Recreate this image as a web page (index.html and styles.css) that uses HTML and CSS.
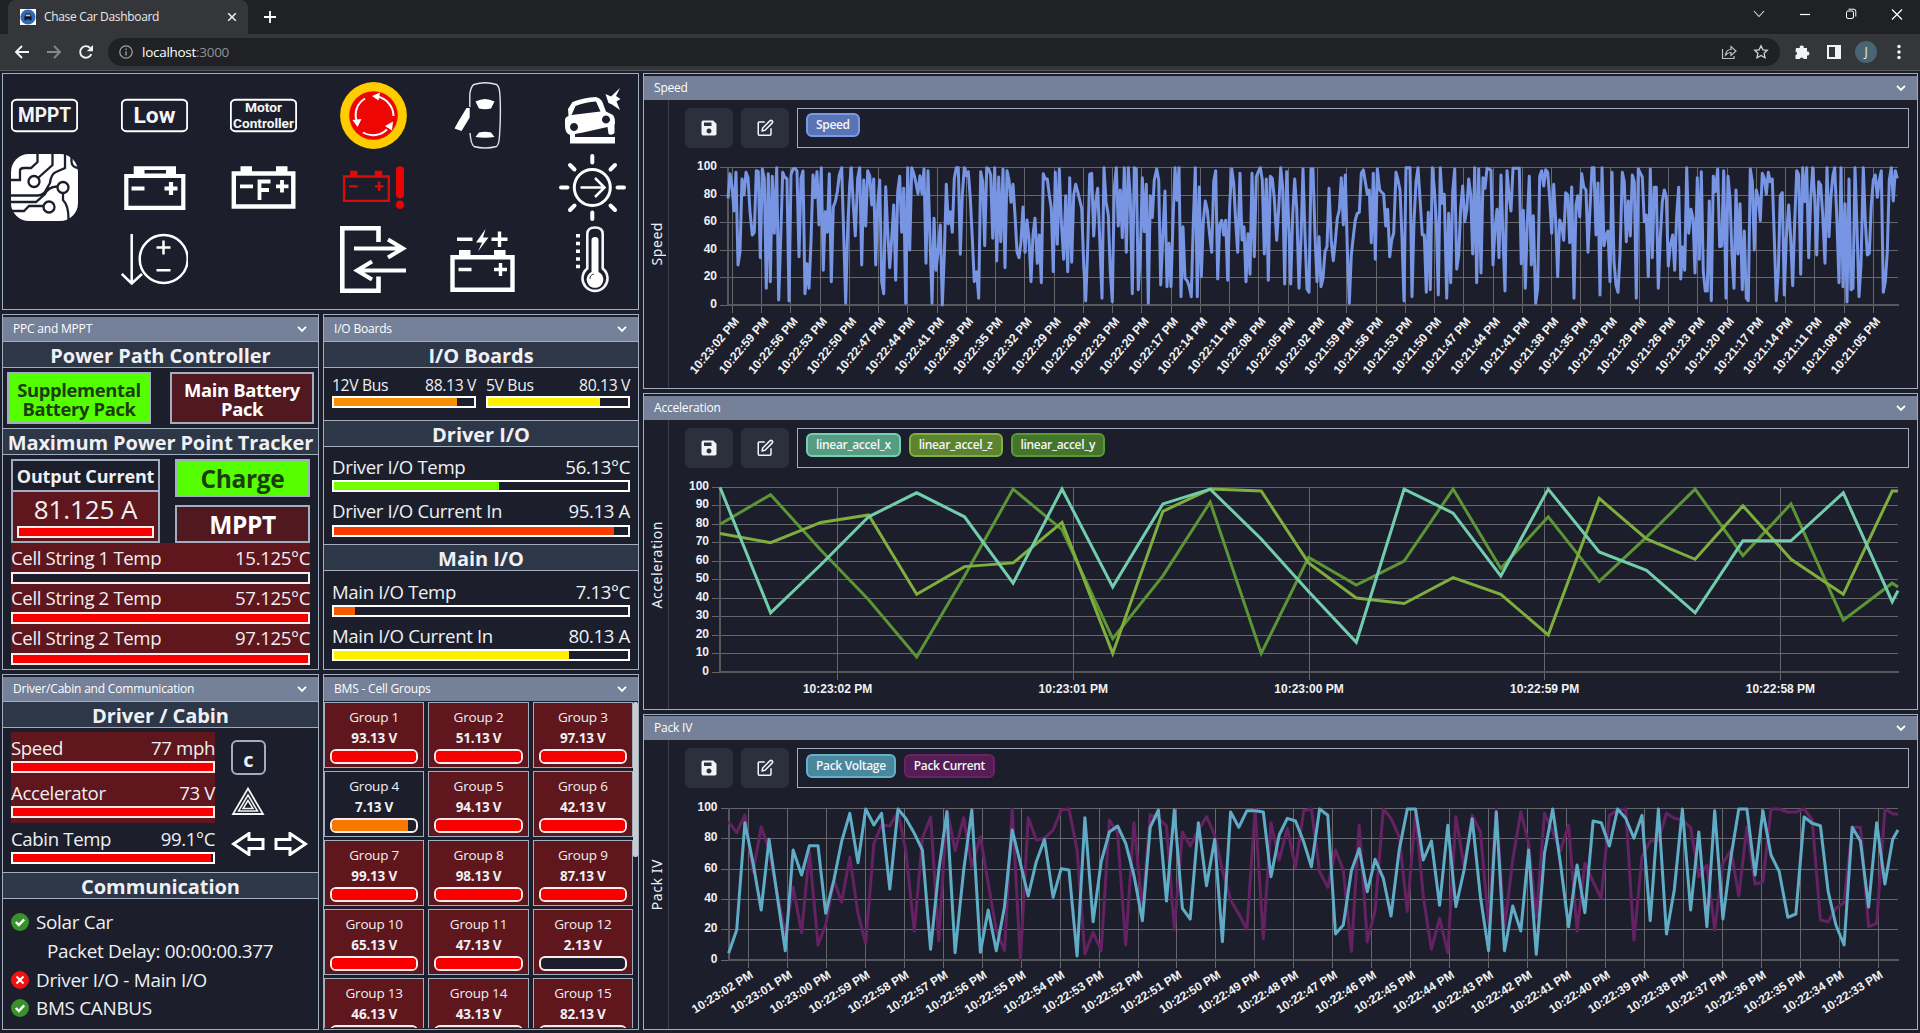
FILE: index.html
```html
<!DOCTYPE html>
<html lang="en">
<head>
<meta charset="utf-8">
<title>Chase Car Dashboard</title>
<link rel="stylesheet" href="styles.css">
</head>
<body>
<svg width="0" height="0" class="defs">
  <defs>
    <symbol id="chev" viewBox="0 0 12 12"><path d="M2 3.8l4 4 4-4" fill="none" stroke="#fff" stroke-width="1.9"/></symbol>
    <symbol id="save" viewBox="0 0 24 24"><path fill="#f3f4f8" fill-rule="evenodd" d="M5 3h12l4 4v12a2 2 0 0 1-2 2H5a2 2 0 0 1-2-2V5a2 2 0 0 1 2-2zM6 5.500v4h9v-4zM12 12.500a3 3 0 1 0 .01 0z"/></symbol>
    <symbol id="edit" viewBox="0 0 24 24"><g fill="none" stroke="#f3f4f8" stroke-width="2" stroke-linecap="round" stroke-linejoin="round"><path d="M11 4H4.500A1.500 1.500 0 0 0 3 5.500V20a1.500 1.500 0 0 0 1.500 1.500H18.500A1.500 1.500 0 0 0 20 20V13"/><path d="M18.500 2.500a2.100 2.100 0 0 1 3 3L12 15l-4 1 1-4z"/></g></symbol>
    <symbol id="ok" viewBox="0 0 18 18"><circle cx="9" cy="9" r="9" fill="#38912a"/><path d="M4.800 9l3 3 5.400-5.600" fill="none" stroke="#fff" stroke-width="2.400"/></symbol>
    <symbol id="bad" viewBox="0 0 18 18"><circle cx="9" cy="9" r="9" fill="#ee1212"/><path d="M5.500 5.500l7 7M12.500 5.500l-7 7" stroke="#fff" stroke-width="2"/></symbol>
  </defs>
</svg>

<header class="browser">
  <div class="tabstrip">
    <div class="tab">
      <svg class="favicon" viewBox="0 0 16 16"><rect width="16" height="16" fill="#fff"/><circle cx="8" cy="8" r="7.600" fill="#2f6cb8"/><path d="M4.500 7.500l1.200-3h4.600l1.200 3v4H10v-1H6v1H4.500z" fill="#10131c"/><path d="M6 5.600h4l.6 1.600H5.400z" fill="#a9c6e6"/></svg>
      <span class="tab-title">Chase Car Dashboard</span>
      <svg class="tab-close" viewBox="0 0 10 10"><path d="M1.200 1.200l7.600 7.600M8.800 1.200L1.200 8.800" stroke="#e8eaed" stroke-width="1.600"/></svg>
    </div>
    <svg class="newtab" viewBox="0 0 12 12"><path d="M6 0v12M0 6h12" stroke="#fff" stroke-width="1.800"/></svg>
    <div class="winctl">
      <svg viewBox="0 0 12 12"><path d="M1 3l5 5.500L11 3" fill="none" stroke="#ddd" stroke-width="1.100"/></svg>
      <svg viewBox="0 0 12 12"><path d="M1 6.500h10" stroke="#fff" stroke-width="1.200"/></svg>
      <svg viewBox="0 0 12 12"><rect x="1.500" y="3" width="7" height="7.500" rx="1.500" fill="none" stroke="#fff"/><path d="M3.500 1.200h5.300a2 2 0 0 1 2 2V8.500" fill="none" stroke="#fff"/></svg>
      <svg viewBox="0 0 12 12"><path d="M1 1.500l10 10M11 1.500l-10 10" stroke="#fff" stroke-width="1.200"/></svg>
    </div>
  </div>
  <div class="toolbar">
    <svg class="nav" viewBox="0 0 16 16"><path d="M15 8H2M8 2L2 8l6 6" fill="none" stroke="#f1f3f4" stroke-width="1.900"/></svg>
    <svg class="nav" viewBox="0 0 16 16"><path d="M1 8h13M8 2l6 6-6 6" fill="none" stroke="#85878b" stroke-width="1.900"/></svg>
    <svg class="nav" viewBox="0 0 16 16"><path d="M13.300 10.200A5.800 5.800 0 1 1 12.200 4" fill="none" stroke="#f1f3f4" stroke-width="1.900"/><path d="M15 1v6.200H8.800z" fill="#f1f3f4"/></svg>
    <div class="url">
      <svg class="info" viewBox="0 0 14 14"><circle cx="7" cy="7" r="6.200" fill="none" stroke="#9aa0a6" stroke-width="1.300"/><path d="M7 6.300V10.500M7 3.500v1.500" stroke="#9aa0a6" stroke-width="1.400"/></svg>
      <span class="host">localhost<i>:3000</i></span>
      <svg class="share" viewBox="0 0 16 16"><path d="M1.500 5v9.500H13V12M4.500 11C5 7.500 7 5.500 10 5.500V2.500l5 4.500-5 4.500v-3C7.500 8.500 6 9.300 4.500 11z" fill="none" stroke="#bdc1c6" stroke-width="1.200"/></svg>
      <svg class="star" viewBox="0 0 16 16"><path d="M8 1.700l1.900 4.100 4.400.5-3.200 3 .9 4.400L8 11.500l-4 2.200.9-4.400-3.200-3 4.400-.5z" fill="none" stroke="#d0d3d7" stroke-width="1.300"/></svg>
    </div>
    <svg class="ext" viewBox="0 0 16 16"><path fill="#f1f3f4" d="M2 4h3.800a2 2 0 1 1 3.900 0H13v3.600a2 2 0 1 1 0 3.900V15H9.700a2 2 0 0 0-3.900 0H1.500v-3.700a2 2 0 0 0 0-3.900z"/></svg>
    <svg class="side" viewBox="0 0 14 14"><path fill="#f1f3f4" fill-rule="evenodd" d="M0 0h14v14H0zM2 2v10h6V2z"/></svg>
    <span class="avatar">J</span>
    <svg class="dots" viewBox="0 0 4 16"><circle cx="2" cy="2.500" r="1.700" fill="#fff"/><circle cx="2" cy="8" r="1.700" fill="#fff"/><circle cx="2" cy="13.500" r="1.700" fill="#fff"/></svg>
  </div>
</header>

<main class="app">
  <div class="left">
    <section class="icons">
      <svg viewBox="0 0 67 67"><rect x=".8" y="17.800" width="65.400" height="31.400" rx="4.500" class="l2"/><text x="33.500" y="40" textLength="53" lengthAdjust="spacingAndGlyphs" font-size="19.500" class="t">MPPT</text></svg>
      <svg viewBox="0 0 67 67"><rect x=".8" y="17.800" width="65.400" height="31.400" rx="4.500" class="l2"/><text x="33.500" y="41.300" textLength="42" lengthAdjust="spacingAndGlyphs" font-size="22" class="t">Low</text></svg>
      <svg viewBox="0 0 67 67"><rect x=".8" y="17.800" width="65.400" height="31.400" rx="4.500" class="l2"/><text x="33.500" y="30" textLength="37" lengthAdjust="spacingAndGlyphs" font-size="13.500" class="t">Motor</text><text x="33.500" y="45.500" textLength="61" lengthAdjust="spacingAndGlyphs" font-size="13.500" class="t">Controller</text></svg>
      <svg viewBox="0 0 67 67"><circle cx="33.500" cy="33.500" r="33.400" fill="#fc0"/><circle cx="33.500" cy="33.500" r="24.300" fill="#f00505"/><g class="l2"><path d="M53.500 34A20 20 0 0 0 37 14.500M25 16.500a19 19 0 0 0-8.500 22M23 50.500a20 20 0 0 0 24-3"/></g><path fill="#fff" d="M32 14l8-3.500-1.500 8zM17.500 45l-5-7 9-1zM53 39.500l-1 9-7-4.500z"/></svg>
      <svg viewBox="0 0 67 67"><path d="M20.800 25V12Q22 4 25 2.500Q36 -1 47.500 2.500Q50.500 4 51 14Q52 33 50.500 54Q50 62.500 47.500 64.500Q36 67.500 25 64.500Q22 62.500 21 51" fill="none" stroke="#dfe2e8" stroke-width="1.400"/><path fill="#fff" d="M26.500 19.500Q36 14.500 45.500 19.500L42 26.500Q36 28 30 26.500zM30 50.500Q36 49 42 50.500L45.500 55Q36 56.500 26.500 55zM17.500 26h3.200v9.500L12.500 49l-7-2.500L9 40z"/></svg>
      <svg viewBox="0 0 67 67"><path fill="#fff" fill-rule="evenodd" d="M9 27L13.500 20Q25 15.500 37 15Q41 16 43 19L47 29.500L54 33Q57 38 55.500 43V51Q53 54 49.500 52L48.500 45L24 50.500L16 52V55H56V61.500H11V53Q6 51 6 44V38Q6 35 9.500 34zM12.500 33L41.500 29.500L37 19.500Q26 20 16.500 24zM15 41a4 4 0 1 0 .01 0zM47 33.500a4 4 0 1 0 .01 0zM61 6L57 14L61.500 17L57.500 19.500L61 28L53 22.500L49.500 21L46.500 12L52 14.500z"/></svg>

      <svg viewBox="0 0 67 67"><rect width="67" height="67" rx="18" fill="#fff"/><g fill="none" stroke="#1c1f2b" stroke-width="2.300"><path d="M0 26H9V17Q9 14 13 14H20L26.500 8V0M41.500 0V11L27 24M0 41.500H27Q33 41 35 36L39 29Q40 20 45 18L54 14V0M60.500 0V8Q61 13 67 14M0 48H25L34 40Q37 33 46 32.500M52 39V46Q58 52 57.500 67M0 57H13L18 52H32"/><circle cx="23" cy="27.500" r="5.500" fill="#fff"/><circle cx="52" cy="33.500" r="5.500" fill="#fff"/><circle cx="38" cy="53" r="5.500" fill="#fff"/></g></svg>
      <svg viewBox="0 0 67 67"><g class="l4"><path d="M5.300 22H62.300V53.800H5.300zM10.500 34.500H23.500M43.500 34.500h13M50 28v13" stroke-width="4.200"/></g><path fill="#fff" fill-rule="evenodd" d="M12.700 12.300H55V20H12.700zM23.500 16V19.500H45V16z"/></svg>
      <svg viewBox="0 0 67 67"><g class="l4"><path d="M3.800 19.500H63.300V52.500H3.800z" stroke-width="4.400"/><path d="M10 32.300H23M46 32.300h12.500M52 26v12.500M29.500 46V27.500H40.500M29.500 36H39" stroke-width="3.800"/></g><path fill="#fff" d="M10.500 12.300h11.500V18H10.500zM46 12.300h11.500V18H46z"/></svg>
      <svg viewBox="0 0 67 67"><path d="M4 22.500H48.800V46.800H4zM9 32.300H17.500M35 32.300h8.500M39.200 27.500v9.500" fill="none" stroke="#d90b0b" stroke-width="2.300"/><path fill="#ea0505" d="M10 16.700h7.500V22H10zM34.800 16.700h7.500V22H34.800z"/><rect x="56" y="12.300" width="8" height="32" rx="3.800" fill="#ea0505"/><circle cx="60" cy="50.800" r="4.200" fill="#ea0505"/></svg>
      <span></span>
      <svg viewBox="0 0 67 67"><g class="l3"><circle cx="33.300" cy="33.500" r="18"/><path d="M21.500 33.500H45M36 24L45.500 33.500L36 43" stroke-width="2.500"/><path stroke-width="4" stroke-linecap="round" d="M33.300 2v6.500M33.300 58.500v6.500M2 33.500h6.500M58.500 33.500H65M11 11l4.500 4.500M51.500 51.500L56 56M11 56l4.500-4.500M51.500 15.500L56 11"/></g></svg>

      <span></span>
      <svg viewBox="0 0 67 67"><g class="l2h"><path d="M10.700 8V57M.8 48L10.700 57.500L21 48M35.500 21.500H49.500M42.500 14.500v14M35.500 44.300h14"/><circle cx="42.700" cy="33" r="24"/></g></svg>
      <span></span>
      <svg viewBox="0 0 67 67"><g class="l4"><path d="M38.500 16V2.300H2.300V64.700H38.500V50.500" stroke-width="4.600"/><path d="M14 22.500H62M48 13.500L63 22.500L48 31.500M66 44.500H18M32 35.500L17 44.500L32 53.500" stroke-width="4"/></g></svg>
      <svg viewBox="0 0 67 67"><g class="l4"><path d="M3.500 31.300H63.500V63.800H3.500z" stroke-width="4.400"/><path d="M9.500 43.500H22.500M45 43.500h13M51.500 37v13M8 13.300H23.500M42.500 13.300H58.500M50.500 5.500V21" stroke-width="3.400"/></g><path fill="#fff" d="M10 24h11.500v6H10zM45 24h11.500v6H45zM36.500 3L27 16.500H33L29 25.500L39.500 11.500H34z"/></svg>
      <svg viewBox="0 0 67 67"><path d="M28.300 42.500V8Q28.300 1.500 36 1.500Q43.700 1.500 43.700 8V42.500A12.500 12.500 0 1 1 28.300 42.500z" fill="none" stroke="#f4f5f8" stroke-width="2.600"/><path d="M32.500 46V14Q32.500 11 36 11Q39.500 11 39.500 14V46A8.300 8.300 0 1 1 32.500 46z" fill="#fff"/><path d="M31 53a5 5 0 0 1 4-5" stroke="#333846" fill="none"/><path d="M17 9.800h4M17 17.500h4M17 25.300h4M17 33h4M17 40.500h4" stroke="#fff" stroke-width="3.600"/></svg>
    </section>

    <section class="panel ppc">
      <div class="bar-head"><span>PPC and MPPT</span><svg><use href="#chev"/></svg></div>
      <h2>Power Path Controller</h2>
      <div class="packs"><div class="chip on">Supplemental<br>Battery Pack</div><div class="chip off">Main Battery<br>Pack</div></div>
      <h2 class="wide">Maximum Power Point Tracker</h2>
      <div class="mppt">
        <div class="out"><b>Output Current</b><div class="outv"><span>81.125 A</span><div class="m"><i style="width:100%"></i></div></div></div>
        <div class="modes"><div class="chip on big">Charge</div><div class="chip off big">MPPT</div></div>
      </div>
      <div class="cells">
        <div class="row"><span>Cell String 1 Temp</span><span>15.125°C</span></div><div class="m"><i style="width:0"></i></div>
        <div class="row"><span>Cell String 2 Temp</span><span>57.125°C</span></div><div class="m"><i style="width:100%"></i></div>
        <div class="row"><span>Cell String 2 Temp</span><span>97.125°C</span></div><div class="m"><i style="width:100%"></i></div>
      </div>
    </section>

    <section class="panel io">
      <div class="bar-head"><span>I/O Boards</span><svg><use href="#chev"/></svg></div>
      <h2>I/O Boards</h2>
      <div class="buses">
        <div><div class="row"><span>12V Bus</span><span>88.13 V</span></div><div class="m"><i style="width:88%;background:#f98e00"></i></div></div>
        <div><div class="row"><span>5V Bus</span><span>80.13 V</span></div><div class="m"><i style="width:80%;background:#fff000"></i></div></div>
      </div>
      <h2>Driver I/O</h2>
      <div class="iob">
        <div class="row"><span>Driver I/O Temp</span><span>56.13°C</span></div><div class="m"><i style="width:56.100%;background:#74ff00"></i></div>
        <div class="row"><span>Driver I/O Current In</span><span>95.13 A</span></div><div class="m"><i style="width:95.100%;background:#f53b00"></i></div>
      </div>
      <h2>Main I/O</h2>
      <div class="iob last">
        <div class="row"><span>Main I/O Temp</span><span>7.13°C</span></div><div class="m"><i style="width:7.130%;background:#f55a00"></i></div>
        <div class="row"><span>Main I/O Current In</span><span>80.13 A</span></div><div class="m"><i style="width:80.100%;background:#fff000"></i></div>
      </div>
    </section>

    <section class="panel cabin">
      <div class="bar-head"><span>Driver/Cabin and Communication</span><svg><use href="#chev"/></svg></div>
      <h2>Driver / Cabin</h2>
      <div class="drv">
        <div class="gauges">
          <div class="g hot"><div class="row"><span>Speed</span><span>77 mph</span></div><div class="m"><i style="width:100%"></i></div></div>
          <div class="g hot"><div class="row"><span>Accelerator</span><span>73 V</span></div><div class="m"><i style="width:100%"></i></div></div>
          <div class="g"><div class="row"><span>Cabin Temp</span><span>99.1°C</span></div><div class="m"><i style="width:99%"></i></div></div>
        </div>
        <div class="signals">
          <div class="gear">c</div>
          <svg class="tri" viewBox="0 0 34 30"><g fill="none" stroke="#f4f5f8"><path d="M17 2.500L32 28H2z" stroke-width="1.800"/><path d="M17 9L26.500 25H7.500z" stroke-width="1.500"/><path d="M17 14.500l5 8H12z" stroke-width="1.500"/></g></svg>
          <div class="arrows"><svg viewBox="0 0 34 24"><path d="M2.500 12L18 1.500V7.500H32V16.500H18V22.500z"/></svg><svg viewBox="0 0 34 24"><path d="M31.500 12L16 1.500V7.500H2V16.500H16V22.500z"/></svg></div>
        </div>
      </div>
      <h2>Communication</h2>
      <ul class="comm">
        <li><svg><use href="#ok"/></svg>Solar Car</li>
        <li class="sub">Packet Delay: 00:00:00.377</li>
        <li><svg><use href="#bad"/></svg>Driver I/O - Main I/O</li>
        <li><svg><use href="#ok"/></svg>BMS CANBUS</li>
      </ul>
    </section>

    <section class="panel bms">
      <div class="bar-head"><span>BMS - Cell Groups</span><svg><use href="#chev"/></svg></div>
      <div class="scroll">
        <div class="groups">
          <div class="cg"><span>Group 1</span><b>93.13 V</b><div class="m"><i style="width:100%"></i></div></div>
          <div class="cg"><span>Group 2</span><b>51.13 V</b><div class="m"><i style="width:100%"></i></div></div>
          <div class="cg"><span>Group 3</span><b>97.13 V</b><div class="m"><i style="width:100%"></i></div></div>
          <div class="cg cool"><span>Group 4</span><b>7.13 V</b><div class="m"><i style="width:90%;background:#f97800"></i></div></div>
          <div class="cg"><span>Group 5</span><b>94.13 V</b><div class="m"><i style="width:100%"></i></div></div>
          <div class="cg"><span>Group 6</span><b>42.13 V</b><div class="m"><i style="width:100%"></i></div></div>
          <div class="cg"><span>Group 7</span><b>99.13 V</b><div class="m"><i style="width:100%"></i></div></div>
          <div class="cg"><span>Group 8</span><b>98.13 V</b><div class="m"><i style="width:100%"></i></div></div>
          <div class="cg"><span>Group 9</span><b>87.13 V</b><div class="m"><i style="width:100%"></i></div></div>
          <div class="cg"><span>Group 10</span><b>65.13 V</b><div class="m"><i style="width:100%"></i></div></div>
          <div class="cg"><span>Group 11</span><b>47.13 V</b><div class="m"><i style="width:100%"></i></div></div>
          <div class="cg"><span>Group 12</span><b>2.13 V</b><div class="m"><i style="width:0"></i></div></div>
          <div class="cg"><span>Group 13</span><b>46.13 V</b><div class="m"><i style="width:100%"></i></div></div>
          <div class="cg"><span>Group 14</span><b>43.13 V</b><div class="m"><i style="width:100%"></i></div></div>
          <div class="cg"><span>Group 15</span><b>82.13 V</b><div class="m"><i style="width:100%"></i></div></div>
        </div>
        <div class="thumb"></div>
      </div>
    </section>
  </div>

  <div class="right">
    <section class="panel chart">
      <div class="bar-head"><span>Speed</span><svg><use href="#chev"/></svg></div>
      <div class="body">
        <div class="vlabel"><span>Speed</span></div>
        <div class="plot">
          <div class="tools">
            <div class="btn"><svg class="disk"><use href="#save"/></svg></div><div class="btn"><svg><use href="#edit"/></svg></div>
            <div class="tags"><span class="tag" style="background:#5a73b4;border-color:#7a99e6">Speed</span></div>
          </div>
          <svg class="cv" id="speed"></svg>
        </div>
      </div>
    </section>
    <section class="panel chart">
      <div class="bar-head"><span>Acceleration</span><svg><use href="#chev"/></svg></div>
      <div class="body">
        <div class="vlabel"><span>Acceleration</span></div>
        <div class="plot">
          <div class="tools">
            <div class="btn"><svg class="disk"><use href="#save"/></svg></div><div class="btn"><svg><use href="#edit"/></svg></div>
            <div class="tags"><span class="tag" style="background:#559c82;border-color:#73d2b0">linear_accel_x</span><span class="tag" style="background:#5c832f;border-color:#80b040">linear_accel_z</span><span class="tag" style="background:#44752b;border-color:#5c9a38">linear_accel_y</span></div>
          </div>
          <svg class="cv" id="accel"></svg>
        </div>
      </div>
    </section>
    <section class="panel chart tight">
      <div class="bar-head"><span>Pack IV</span><svg><use href="#chev"/></svg></div>
      <div class="body">
        <div class="vlabel"><span>Pack IV</span></div>
        <div class="plot">
          <div class="tools">
            <div class="btn"><svg class="disk"><use href="#save"/></svg></div><div class="btn"><svg><use href="#edit"/></svg></div>
            <div class="tags"><span class="tag" style="background:#4a869c;border-color:#63b0cc">Pack Voltage</span><span class="tag" style="background:#541d54;border-color:#6b2167">Pack Current</span></div>
          </div>
          <svg class="cv" id="pack"></svg>
        </div>
      </div>
    </section>
  </div>
</main>
<script src="charts.js"></script>
</body>
</html>
```
FILE: styles.css
```css
* { box-sizing: border-box; margin: 0; padding: 0; }
html, body { width: 1920px; height: 1033px; overflow: hidden; background: #1c1f2b; }
body { font-family: "Open Sans", "Noto Sans", sans-serif; color: #eef0f4; display: flex; flex-direction: column; }
svg { display: block; flex: none; }
.defs { position: absolute; }

/* browser frame */
.browser { height: 71px; flex: none; font-size: 12px; }
.tabstrip { height: 34px; background: #202124; display: flex; align-items: center; padding-left: 8px; }
.tab { width: 240px; height: 34px; background: #35363a; border-radius: 8px 8px 0 0; display: flex; align-items: center; padding: 0 11px 0 12px; }
.favicon { width: 16px; height: 16px; margin-right: 8px; }
.tab-title { flex: 1; letter-spacing: -.33px; color: #e8eaed; padding-bottom: 2px; }
.tab-close { width: 10px; height: 10px; }
.newtab { width: 12px; height: 12px; margin-left: 16px; }
.winctl { margin-left: auto; display: flex; gap: 34px; padding-right: 17px; padding-bottom: 6px; }
.winctl svg { width: 12px; height: 12px; }
.toolbar { height: 37px; background: #35363a; border-bottom: 1px solid #54575b; display: flex; align-items: center; padding: 0 19px 0 14px; }
.nav { width: 16px; height: 16px; margin-right: 16px; }
.url { height: 28px; width: 1672px; border-radius: 14px; background: #202124; display: flex; align-items: center; padding: 0 11px 0 11px; margin-left: -2px; }
.info { width: 14px; height: 14px; margin-right: 9px; }
.host { flex: 1; font-size: 13.500px; letter-spacing: -.28px; color: #fff; }
.host i { font-style: normal; color: #8d9196; }
.share, .star { width: 16px; height: 16px; }
.share { margin-right: 16px; }
.ext { width: 16px; height: 16px; margin-left: 14px; }
.side { width: 14px; height: 14px; margin-left: 17px; }
.avatar { width: 22px; height: 22px; border-radius: 50%; background: #4a6572; text-align: center; line-height: 22px; margin-left: 14px; }
.dots { width: 4px; height: 16px; margin-left: auto; }

/* page grid */
.app { display: grid; grid-template-columns: 637px 1275px; column-gap: 4px; padding: 2px 2px 3px; height: 962px; }
.left { display: grid; grid-template-columns: 317px 316px; gap: 4px; grid-template-rows: 237px 356px 356px; }
.right { display: grid; gap: 4px; grid-template-rows: 316px 317px 316px; }
.panel, .icons { border: 1px solid #a0aec0; overflow: hidden; }
.icons { grid-column: 1 / 3; display: grid; grid-template-columns: repeat(6, 67px); grid-auto-rows: 67px; row-gap: 5px; justify-content: space-between; padding: 8px 12px 0 8px; }
.icons svg { width: 67px; height: 67px; }
.icons .t { font-family: Roboto, sans-serif; font-weight: 700; fill: #f4f5f7; text-anchor: middle; }
.l2, .l2h, .l3, .l4 { fill: none; stroke: #fff; stroke-width: 2; }
.l2h { stroke-width: 2.5; }
.l3 { stroke-width: 3; }
.l4 { stroke-width: 4; }
.panel { display: flex; flex-direction: column; padding-top: 2px; }
.panel > * { flex: none; }
.tight { padding-top: 1px; }
.bar-head { height: 24px; background: #748198; color: #fff; font-size: 12px; letter-spacing: -.2px; display: flex; justify-content: space-between; align-items: center; padding: 0 10px; }
.bar-head span { padding-bottom: 2px; }
.bar-head svg { width: 12px; height: 12px; }
h2 { height: 27px; background: #2d3748; border: solid #a0aec0; border-width: 1px 0; font-size: 20px; line-height: 27px; text-align: center; letter-spacing: -.05px; white-space: nowrap; }
h2.wide { letter-spacing: -.12px; }
.m { height: 12px; border: 2px solid #fff; background: #1c1f2b; }
.m i { display: block; height: 100%; background: #f80000; }
.row { display: flex; justify-content: space-between; font-size: 18.600px; line-height: 24px; letter-spacing: -.35px; white-space: nowrap; }
.chip { border: 2px solid #a0aec0; font-weight: 700; text-align: center; display: flex; align-items: center; justify-content: center; font-size: 18.400px; line-height: 19px; letter-spacing: -.35px; white-space: nowrap; }
.on { background: #55ff00; color: #1b3d10; }
.off { background: #521820; color: #fff; }
.big { font-size: 24.500px; height: 38px; }

/* power path and tracker */
.packs { display: flex; justify-content: space-between; padding: 4px; height: 60px; }
.packs .chip { width: 144px; height: 52px; padding-top: 2px; }
.mppt { display: flex; justify-content: space-between; padding: 4px 8px 0; height: 88px; }
.out { width: 149px; border: 2px solid #a0aec0; }
.out b { display: block; height: 31px; border-bottom: 2px solid #a0aec0; font-size: 18px; line-height: 30px; text-align: center; letter-spacing: -.15px; white-space: nowrap; }
.outv { background: #5f161c; height: 49px; padding: 0 4px; text-align: center; font-size: 26px; line-height: 34px; letter-spacing: -.1px; }
.outv .m { border-color: #fdeaea; }
.modes { width: 135px; display: flex; flex-direction: column; justify-content: space-between; }
.cells { margin: 0 8px; background: #5f161c; padding-top: 2px; }
.cells .row { height: 28px; line-height: 27px; }
.cells .m { border-color: #fdeaea; }
.cells .row:first-child { height: 27px; line-height: 25px; }
.cells .row:nth-last-child(2) { height: 29px; }

/* input and output boards */
.buses { display: grid; grid-template-columns: 144px 144px; gap: 10px; padding: 4px 8px 0; height: 52px; }
.buses .row { font-size: 15.700px; height: 24px; line-height: 26px; }
.iob { padding: 6px 8px 0; height: 97px; }
.iob .row { height: 33px; line-height: 37px; }
.iob .row:first-child { height: 27px; line-height: 27px; }
.iob.last { padding-top: 7px; }
.iob.last .row:nth-child(3) { height: 32px; }

/* cabin */
.drv { display: flex; padding: 4px 8px 0; height: 144px; }
.gauges { width: 204px; }
.g { height: 45px; }
.g + .g { height: 46px; }
.g .row { height: 29px; line-height: 31px; }
.hot { background: #5f161c; }
.hot .m { border-color: #fdeaea; }
.g + .g .row { line-height: 32px; }
.signals { padding: 8px 0 0 16px; }
.gear { width: 35px; height: 35px; border: 2px solid #a0aec0; border-radius: 6px; font-weight: 700; font-size: 20px; line-height: 35px; text-align: center; }
.tri { width: 34px; height: 30px; margin-top: 11px; }
.arrows { display: flex; gap: 9px; margin-top: 16px; }
.arrows svg { width: 34px; height: 24px; }
.arrows path { fill: none; stroke: #fff; stroke-width: 3; }
.comm { list-style: none; padding: 9px 8px 0; font-size: 18.900px; letter-spacing: -.3px; }
.comm li { height: 28.700px; display: flex; align-items: center; gap: 7px; white-space: nowrap; }
.comm svg { width: 18px; height: 18px; }
.comm .sub { padding-left: 36px; }

/* battery cell groups */
.scroll { display: flex; justify-content: space-between; height: 327px; overflow: hidden; padding-top: 1px; }
.groups { width: 309px; display: grid; grid-template-columns: repeat(3, 1fr); column-gap: 4px; grid-auto-rows: 66px; row-gap: 3px; }
.cg { border: 1px solid #a0aec0; background: #5f161c; text-align: center; padding: 4px 5px 0; display: flex; flex-direction: column; font-size: 13.500px; line-height: 21px; letter-spacing: -.2px; }
.cg .m { height: 15px; border-radius: 6px; overflow: hidden; border-color: #fdeaea; }
.cg.cool { background: #1c1f2b; }
.thumb { width: 5px; height: 155px; background: #c9cbcf; border-radius: 2px; }

/* charts */
.panel > .body { display: flex; flex: 1; min-height: 0; }
.vlabel { width: 25px; border-right: 1px solid #3b3f4c; display: flex; align-items: center; justify-content: center; }
.vlabel span { writing-mode: vertical-rl; transform: rotate(180deg); font-size: 14px; letter-spacing: .55px; font-family: "Noto Sans", sans-serif; white-space: nowrap; }
.plot { flex: 1; }
.tools { display: flex; gap: 8px; padding: 8px 8px 0 16px; height: 48px; }
.btn { width: 48px; height: 40px; border-radius: 6px; background: #2c303d; display: flex; align-items: center; justify-content: center; }
.btn svg { width: 18px; height: 18px; }
.btn .disk { width: 20px; height: 20px; }
.tags { flex: 1; border: 1px solid #a0aec0; padding: 4px 8px; display: flex; align-items: flex-start; gap: 8px; }
.tight .tags { padding-top: 5px; }
.tag { height: 24px; border: 2px solid; border-radius: 6px; font-size: 12px; font-weight: 600; line-height: 20px; padding: 0 8px; letter-spacing: -.33px; color: #f4f6f8; }
.cv { width: 1248px; height: 240px; }
.cv text { font: 700 12px "Liberation Sans", Arial, sans-serif; fill: #f0f1f4; }
.cv .grid { stroke: #66676b; stroke-width: 1; fill: none; shape-rendering: crispEdges; }
.cv .axis { stroke: #57585c; stroke-width: 2; fill: none; shape-rendering: crispEdges; }
```
FILE: charts.js
```js
const NS = "http://www.w3.org/2000/svg";

function add(svg, name, attrs, text) {
  const el = document.createElementNS(NS, name);
  for (const k in attrs) el.setAttribute(k, attrs[k]);
  if (text !== undefined) el.textContent = text;
  svg.appendChild(el);
}

function clock(seconds) {
  const h = Math.floor(seconds / 3600), m = Math.floor(seconds / 60) % 60, s = seconds % 60;
  return h + ":" + String(m).padStart(2, "0") + ":" + String(s).padStart(2, "0") + " PM";
}

/* Each trace is a list of blocks: [x offset, x scale, sample pairs]; y0/ys map samples to pixels. */
function draw(id, c) {
  const svg = document.getElementById(id);
  const px = v => Math.floor(v) + 0.5;
  for (let v = 0; v <= 100; v += c.step) {
    const y = px(c.bottom - (c.bottom - c.top) * v / 100);
    add(svg, "path", { class: "grid", d: `M${c.left - 8} ${y}H${c.right}` });
    add(svg, "text", { x: c.left - 11, y: y + 2.5, "text-anchor": "end" }, v);
  }
  for (let i = 0; i < c.count; i++) {
    const x = c.first + i * c.gap;
    add(svg, "path", { class: "grid", d: `M${px(x)} ${c.top}V${c.bottom + 8}` });
    const label = clock(10 * 3600 + 23 * 60 + 2 - i * c.every);
    if (c.angle) add(svg, "text", { "text-anchor": "end", transform: `translate(${x + c.dx} ${c.bottom + c.dy}) rotate(${-c.angle})` }, label);
    else add(svg, "text", { x, y: c.bottom + 21, "text-anchor": "middle" }, label);
  }
  add(svg, "path", { class: "axis", d: `M${c.left} ${c.top - 1}V${c.bottom}H${c.right + 1}` });
  for (const t of c.traces) {
    const pts = [];
    for (const [ox, sx, raw] of t.blocks)
      for (const p of raw.trim().split(/\s+/)) {
        const [a, b] = p.split(",").map(Number);
        pts.push((ox + a * sx).toFixed(1) + "," + (c.y0 + b * c.ys).toFixed(1));
      }
    add(svg, "polyline", { points: pts.join(" "), fill: "none", stroke: t.color, "stroke-width": t.width || 3, "stroke-linejoin": t.join || "round" });
  }
}

draw("speed", {
  left: 59, right: 1229, top: 19.5, bottom: 157, step: 20,
  first: 63.3, gap: 29.26, count: 40, every: 3, angle: 50, dx: 7.5, dy: 16.5, y0: 7, ys: 1 / 3,
  traces: [{ color: "#7795e2", blocks: [
    [51, 1 / 3, "24,130 30,56 36,95 42,168 48,52 54,330 60,290 66,72 72,120 78,52 84,68 90,170 97,240 103,232 109,47 115,50 121,308 127,42 133,70 139,400 145,56 151,380 157,64 163,235 170,38 176,435 182,250 188,52 194,66 201,72 207,438 213,60 219,42 225,40 231,48 237,305 243,70 249,48 255,416 261,326 267,400 273,260 279,60 285,128 291,50 297,210 304,38 310,346 316,170 322,232 328,56 334,380 340,155 346,140 352,110 358,60 365,38 371,240 377,445 383,220 389,90 394,38 400,150 406,243 413,70 419,38 425,330 431,75 437,213 443,47 449,62 455,150 461,72 467,330 473,150 479,75 485,380 491,416 497,95 503,230 509,338 515,250 521,150 527,376 533,110 539,64 545,232 551,100 557,445 563,38 569,285 575,38 581,55 587,80 594,116 600,62 606,116 612,42 618,325 624,47 630,250 636,445 642,190 648,346 654,290 661,210 667,450 673,300 679,88 685,206 691,170 697,232 703,70 709,38 715,38 721,298 727,120 733,38 739,62 745,50 751,130 757,250 763,380 770,350 776,430 782,50 788,80 794,272 800,38 806,42 812,60 818,250 824,38 830,318 836,66 842,260 849,42 855,338 861,47 867,75 873,142 879,88 885,180 891,290 897,308 903,260 909,156 915,292 921,195 927,250 933,380 939,240 945,190 952,325 958,240 964,383 970,56 976,72 982,72 988,120 994,160 1000,350 1006,52 1012,268 1018,42 1024,200 1031,313 1037,122 1043,350 1049,68 1055,322 1061,120 1067,88 1073,110 1079,135 1085,160 1091,330 1097,438 1103,280 1109,58 1115,55 1121,243 1127,140 1133,100 1139,250 1146,430 1152,38 1158,140 1165,180 1171,350 1177,440 1183,100"],
    [446, 1 / 3, "4,38 10,213 16,105 22,248 28,38 34,292 40,38 46,130 52,416 58,38 64,42 70,404 76,300 82,68 88,230 94,88 100,445 106,122 112,188 118,75 125,42 131,75 137,390 143,250 150,108 156,395 162,265 168,395 174,200 180,38 186,136 192,38 198,425 204,215 210,370 217,378 223,395 229,425 235,200 241,38 247,425 253,96 259,365 265,200 271,138 277,165 283,230 290,292 296,80 302,47 308,372 314,210 320,196 326,240 332,196 338,376 344,150 350,42 356,85 362,200 368,292 375,55 381,255 387,215 393,380 399,236 405,358 411,55 418,305 424,65 430,50 436,38 442,75 448,297 454,72 460,376 466,64 472,70 478,130 485,256 491,160 497,38 503,100 509,387 515,50 521,200 527,387 533,180 539,72 545,160 552,400 558,250 564,42 570,240 576,402 582,412 588,42 594,42 600,240 606,380 612,245 618,395 624,370 630,290 636,275 642,100 649,260 655,317 661,260 667,190 673,165 679,68 685,210 691,60 697,280 703,445 709,300 715,245 721,195 727,175 733,172 739,55 745,44 751,80 757,118 763,105 769,263 775,55 781,313 787,42 794,105 800,112 806,118 812,213 818,163 824,305 830,255 836,235 843,52 849,75 855,105 861,250 867,438 873,38 879,38 885,38 891,425 897,200 903,80 909,38 915,130 922,240 928,240 934,412 940,172 946,404 952,38 958,100 964,200 970,420 976,38 982,145 988,118 995,430 1001,175 1007,383 1013,110 1019,42 1025,342 1031,300 1037,160 1043,93 1049,200 1055,165 1061,72 1067,120 1073,297 1079,38 1085,383 1091,42 1098,354 1104,68 1110,100 1116,40 1122,42 1128,46 1134,330 1140,220 1146,163 1152,308 1158,60 1164,250 1170,408 1176,47 1182,120"],
    [841, 1 / 3, "3,168 9,40 15,40 21,40 28,40 34,326 40,166 46,400 52,200 58,64 64,330 70,182 77,445 83,400 89,64 95,47 101,93 107,44 113,52 119,130 125,235 131,88 137,200 143,365 149,195 155,210 161,256 167,113 173,120 179,263 185,96 192,430 198,150 203,122 209,185 215,56 221,95 228,105 234,292 240,160 246,38 252,38 258,240 264,84 270,420 276,38 282,272 288,240 294,228 300,380 306,52 312,320 318,390 324,412 330,300 337,52 343,80 349,260 355,138 361,243 367,60 373,80 379,430 385,42 391,55 397,66 403,200 409,180 415,365 421,42 427,308 433,97 439,97 445,400 451,250 457,140 463,105 469,125 475,333 481,270 488,240 494,346 500,180 506,97 512,372 518,276 524,346 530,38 536,235 543,163 549,190 555,354 562,68 568,313 574,50 580,350 586,408 592,408 598,138 604,437 610,64 616,110 623,42 629,275 635,273 641,47 648,430 654,64 660,130 666,300 672,400 678,105 684,297 690,146 697,404 703,228 709,430 715,437 721,42 727,80 733,285 739,105 745,130 751,197 757,55 763,70 769,118 775,52 781,80 787,72 793,250 799,437 805,350 811,122 817,113 823,420 829,250 836,150 842,250 848,392 854,200 860,47 866,60 872,358 878,38 884,140 890,38 896,308 902,130 908,38 914,130 920,300 926,80 932,90 938,180 945,325 951,38 957,245 963,120 969,60 974,38 980,180 987,383 993,38 999,395 1005,146 1011,441 1017,72 1023,404 1029,400 1035,38 1041,220 1047,425 1053,330 1060,38 1066,200 1072,300 1078,295 1084,150 1090,75 1096,60 1102,127 1108,75 1114,47 1120,412 1126,380 1132,290 1138,75 1144,38 1150,138 1156,47 1162,70"]
  ] }]
});

const K = 1 / 2.45;
const accelX = [[-29, K, 196], [-29, K, 320], [-29, K, 443], [-29, K, 560], [-29, K, 678], [-29, K, 795], [-29, K, 914], [-29, K, 1034], [-29, K, 1158], [-29, K, 1281], [-29, K, 1397], [-29, K, 1522],
  [611, K, 70], [611, K, 187], [611, K, 304], [611, K, 424], [611, K, 541], [611, K, 657], [611, K, 782], [611, K, 898], [611, K, 1017], [611, K, 1134], [611, K, 1252], [611, K, 1380], [611, K, 1500], [611, K, 1514]];
const accel = values => accelX.map(([o, s, x], i) => [o, s, x + "," + values[i]]);

draw("accel", {
  left: 51, right: 1229, top: 19.5, bottom: 204, step: 10,
  first: 168.6, gap: 235.7, count: 5, every: 1, y0: 203.8, ys: -1.845,
  traces: [
    { color: "#5c9535", join: "miter", blocks: accel([80, 96, 66, 39, 8, 52, 99, 77, 18, 52, 92, 10, 62, 47, 60, 99, 56, 84, 49, 73, 99, 63, 91, 28, 48, 46]) },
    { color: "#7fae3e", join: "miter", blocks: accel([75, 70, 81, 85, 42, 57, 59, 81, 10, 87, 99, 98, 59, 40, 37, 51, 42, 20, 94, 72, 61, 90, 61, 42, 98, 98]) },
    { color: "#72cdac", join: "miter", blocks: accel([100, 32, 58, 84, 97, 84, 48, 99, 46, 91, 99, 72, 43.5, 16, 99, 86, 52, 99, 65, 55, 32, 71, 71, 97, 38, 44]) }
  ]
});

draw("pack", {
  left: 59.500, right: 1229, top: 20.5, bottom: 172, step: 20,
  first: 79.4, gap: 38.96, count: 30, every: 1, angle: 32, dx: 5.5, dy: 17, y0: -78, ys: 1 / 3,
  traces: [
    { color: "#652262", blocks: [
      [-29, K, "217,335 237,368 257,315 277,485 297,350 316,420 336,550 356,672 375,532 396,668 415,425 436,705 455,645 475,510 494,577 514,442 534,610 553,700 573,400 592,345 612,348 632,305 651,420 672,663 692,385 712,321 732,692 752,297 772,422 793,323 813,470 834,380 853,520 873,660 893,722 912,297 932,750 951,323 971,390 991,385 1012,360 1032,300 1051,297 1071,420 1090,732 1110,667 1130,722 1150,330 1170,370 1190,705 1210,338 1231,600 1250,315 1270,325 1290,348 1309,660 1329,366 1348,408 1368,360 1388,320 1408,375 1427,480 1447,570 1467,612 1487,658 1507,297 1527,686 1546,338 1566,450"],
      [611, K, "18,355 38,472 58,302 77,297 97,485 117,532 136,420 155,480 175,724 194,346 214,696 233,600 253,297 272,325 292,380 312,604 332,306 351,560 371,718 391,625 411,728 431,320 451,470 471,316 491,366 511,640 530,297 550,655 570,450 590,306 609,400 628,622 648,310 668,365 687,422 707,346 728,663 747,460 767,515 787,565 807,316 827,300 847,297 867,690 887,440 907,393 927,390 947,310 966,325 986,330 1006,352 1026,500 1046,465 1065,660 1085,460 1105,420 1124,558 1144,352 1164,522 1183,516 1203,297 1223,297 1244,306 1264,306 1284,297 1304,330 1324,630 1343,635 1362,595 1382,578 1402,352 1422,352 1442,650 1462,640 1482,297 1501,311 1514,313"]
    ] },
    { color: "#60acc6", blocks: [
      [-29, K, "217,730 237,660 257,338 277,460 297,600 316,388 336,555 356,722 375,420 396,495 415,407 436,407 455,610 475,510 494,395 514,310 534,458 553,297 573,345 592,310 612,537 632,297 651,325 672,370 692,420 712,718 732,480 752,305 772,728 793,480 813,300 834,727 853,600 873,722 893,590 912,360 932,460 951,558 971,455 991,388 1012,562 1032,476 1051,480 1071,738 1090,323 1110,635 1130,455 1150,366 1170,348 1190,400 1210,495 1231,632 1250,352 1270,300 1290,573 1309,300 1329,595 1348,627 1368,338 1388,527 1408,388 1427,695 1447,306 1467,352 1487,302 1507,302 1527,306 1546,500 1566,375"],
      [611, K, "18,325 38,333 58,395 77,470 97,297 117,316 136,672 155,645 175,482 194,416 214,545 233,448 253,505 272,618 292,420 312,297 332,297 351,450 371,393 391,586 411,346 431,590 451,480 471,326 491,560 511,722 530,306 550,722 570,588 590,663 609,420 628,733 648,430 668,297 687,460 707,650 728,465 747,608 767,333 787,338 807,408 827,297 847,325 867,385 887,316 907,632 927,297 947,672 966,540 986,297 1006,600 1026,366 1046,650 1065,302 1085,627 1105,440 1124,297 1144,297 1164,495 1183,302 1203,435 1223,485 1244,622 1264,612 1284,321 1304,340 1324,347 1343,545 1362,645 1382,705 1402,352 1422,393 1442,591 1462,338 1482,522 1501,388 1514,360"]
    ] }
  ]
});
```
